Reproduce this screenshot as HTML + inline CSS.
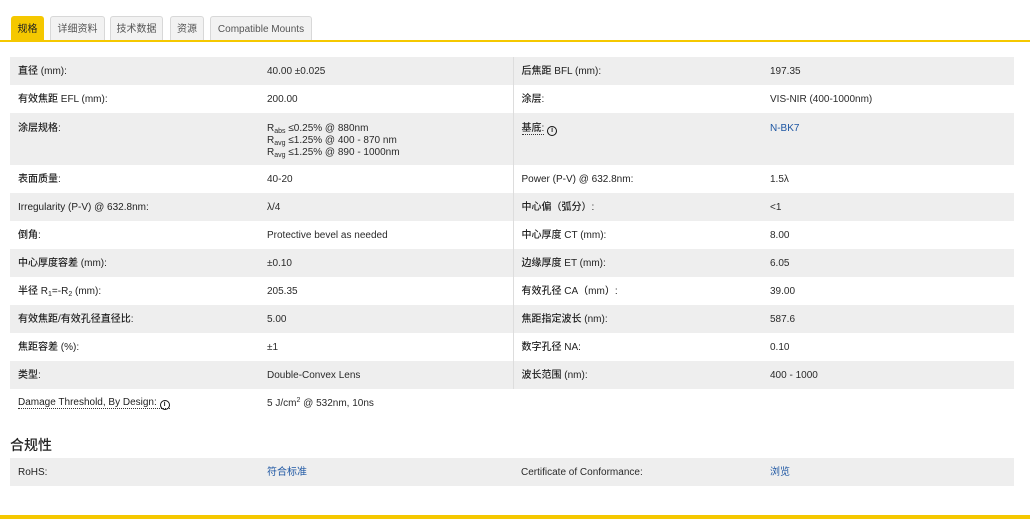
<!DOCTYPE html>
<html><head><meta charset="utf-8"><style>
*{margin:0;padding:0;box-sizing:border-box}
body{width:1030px;height:519px;background:#fff;font-family:"Liberation Sans","Noto Sans CJK SC",sans-serif;font-size:10px;color:#2a2a2a;position:relative;overflow:hidden}
.tab{position:absolute;top:16px;height:24px;border:1px solid #d8d8d8;border-bottom:none;background:#f2f2f2;border-radius:3px 3px 0 0;color:#555;font-size:10px;line-height:25px;text-align:center}
.tab.on{background:#f5c800;border-color:#f5c800;color:#222}
.line{position:absolute;left:0;top:40px;width:1030px;height:2px;background:#f5c800}
table{position:absolute;left:10px;width:1004px;border-collapse:collapse;table-layout:fixed}
td{padding:1px 0 0 8px;height:28px;vertical-align:middle;line-height:12px}
td:first-child,td.c3{font-weight:500;color:#222}
tr:nth-child(odd) td{background:#eeeeee}
td.c3{border-left:1px solid #ddd}
.tall td{height:52px;vertical-align:top;padding-top:10px}
.lnk{color:#1d56a3}
sub,sup{font-size:7px;line-height:0;position:relative;vertical-align:baseline}
sub{top:2px}
sup{top:-4px}
.i{display:inline-block;width:10px;height:10px;border:1.6px solid #111;border-radius:50%;font-size:7px;line-height:7px;text-align:center;font-weight:bold;vertical-align:-1px}
.dot{border-bottom:1px dotted #333}
h3{position:absolute;left:10px;top:435px;font-size:14px;font-weight:500;color:#222}
.bot{position:absolute;left:0;top:515px;width:1030px;height:4px;background:#f5c800}
</style></head><body>
<div class="tab on" style="left:11px;width:33px">规格</div>
<div class="tab" style="left:50px;width:55px">详细资料</div>
<div class="tab" style="left:110px;width:53px">技术数据</div>
<div class="tab" style="left:170px;width:34px">资源</div>
<div class="tab" style="left:210px;width:102px">Compatible Mounts</div>
<div class="line"></div>
<table style="top:57px">
<colgroup><col style="width:249px"><col style="width:254px"><col style="width:249px"><col style="width:252px"></colgroup>
<tr><td>直径 (mm):</td><td>40.00 ±0.025</td><td class="c3">后焦距 BFL (mm):</td><td>197.35</td></tr>
<tr><td>有效焦距 EFL (mm):</td><td>200.00</td><td class="c3">涂层:</td><td>VIS-NIR (400-1000nm)</td></tr>
<tr class="tall"><td>涂层规格:</td><td style="line-height:12px">R<sub>abs</sub> ≤0.25% @ 880nm<br>R<sub>avg</sub> ≤1.25% @ 400 - 870 nm<br>R<sub>avg</sub> ≤1.25% @ 890 - 1000nm</td><td class="c3"><span class="dot">基底:</span> <span class="i">i</span></td><td class="lnk">N-BK7</td></tr>
<tr><td>表面质量:</td><td>40-20</td><td class="c3">Power (P-V) @ 632.8nm:</td><td>1.5λ</td></tr>
<tr><td>Irregularity (P-V) @ 632.8nm:</td><td>λ/4</td><td class="c3">中心偏（弧分）:</td><td>&lt;1</td></tr>
<tr><td>倒角:</td><td>Protective bevel as needed</td><td class="c3">中心厚度 CT (mm):</td><td>8.00</td></tr>
<tr><td>中心厚度容差 (mm):</td><td>±0.10</td><td class="c3">边缘厚度 ET (mm):</td><td>6.05</td></tr>
<tr><td>半径 R<sub>1</sub>=-R<sub>2</sub> (mm):</td><td>205.35</td><td class="c3">有效孔径 CA（mm）:</td><td>39.00</td></tr>
<tr><td>有效焦距/有效孔径直径比:</td><td>5.00</td><td class="c3">焦距指定波长 (nm):</td><td>587.6</td></tr>
<tr><td>焦距容差 (%):</td><td>±1</td><td class="c3">数字孔径 NA:</td><td>0.10</td></tr>
<tr><td>类型:</td><td>Double-Convex Lens</td><td class="c3">波长范围 (nm):</td><td>400 - 1000</td></tr>
<tr><td><span class="dot">Damage Threshold, By Design: <span class="i">i</span></span></td><td>5 J/cm<sup>2</sup> @ 532nm, 10ns</td><td style="border-left:none"></td><td></td></tr>
</table>
<h3>合规性</h3>
<table style="top:458px">
<colgroup><col style="width:249px"><col style="width:254px"><col style="width:249px"><col style="width:252px"></colgroup>
<tr><td>RoHS:</td><td class="lnk">符合标准</td><td style="font-weight:500">Certificate of Conformance:</td><td class="lnk">浏览</td></tr>
</table>
<div class="bot"></div>
</body></html>
